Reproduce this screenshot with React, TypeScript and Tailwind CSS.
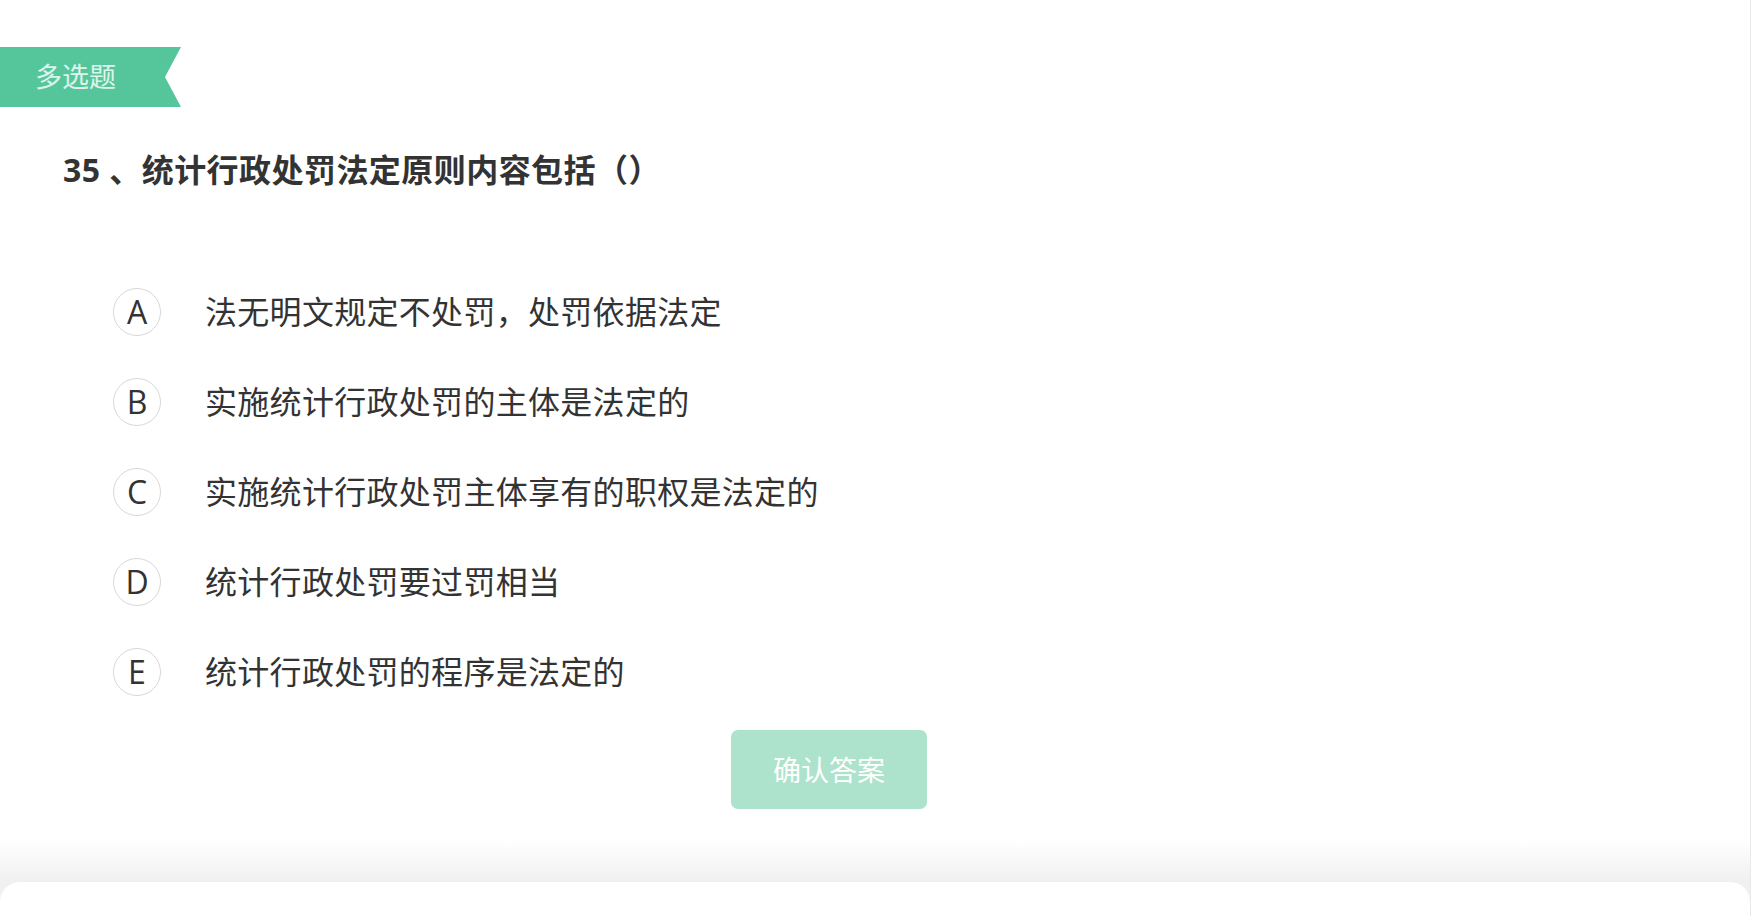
import React from 'react';

const options = [
  { key: 'A', text: '法无明文规定不处罚，处罚依据法定' },
  { key: 'B', text: '实施统计行政处罚的主体是法定的' },
  { key: 'C', text: '实施统计行政处罚主体享有的职权是法定的' },
  { key: 'D', text: '统计行政处罚要过罚相当' },
  { key: 'E', text: '统计行政处罚的程序是法定的' },
];

const font = "font-['Open_Sans','Noto_Sans_CJK_SC',sans-serif]";

const OptionRow = ({ letter, text }: { letter: string; text: string }) => (
  <div className="flex h-[90px] items-center">
    <div className="flex h-[48px] w-[48px] items-center justify-center rounded-full border border-[#d8d8d8] text-[32px] leading-none text-[#333]">
      {letter}
    </div>
    <div className="ml-[44px] text-[32px] leading-[40px] tracking-[0.3px] text-[#333]">{text}</div>
  </div>
);

export default function App() {
  return (
    <div className={`${font} flex h-[916px] w-full overflow-hidden bg-white`}>
      <div className="flex w-[1751px] flex-col border-r border-[#e9e9e9]">
        <div className="pt-[47px]">
          <div className="flex h-[60px] w-[181px] items-center bg-[#55c69b] pl-[35px] text-[27px] text-white/80 [clip-path:polygon(0_0,100%_0,165px_50%,100%_100%,0_100%)]">
            多选题
          </div>
        </div>

        <div className="mt-[43px] pl-[63px] text-[32px] font-bold leading-[40px] tracking-[0.45px] text-[#333]">
          35 、统计行政处罚法定原则内容包括（）
        </div>

        <div className="mt-[77px] flex flex-col pl-[113px]">
          {options.map((o) => (
            <OptionRow key={o.key} letter={o.key} text={o.text} />
          ))}
        </div>

        <div className="mt-[13px] pl-[731px]">
          <button className="flex h-[79px] w-[196px] items-center justify-center rounded-[7px] bg-[#ade3cc] text-[28px] text-white">
            确认答案
          </button>
        </div>

        <div className="mt-[31px] h-[42px] bg-gradient-to-b from-white to-[#f0f0f0]" />
        <div className="flex-1 bg-[#f0f0f0]">
          <div className="h-full rounded-t-[20px] bg-white" />
        </div>
      </div>
    </div>
  );
}
